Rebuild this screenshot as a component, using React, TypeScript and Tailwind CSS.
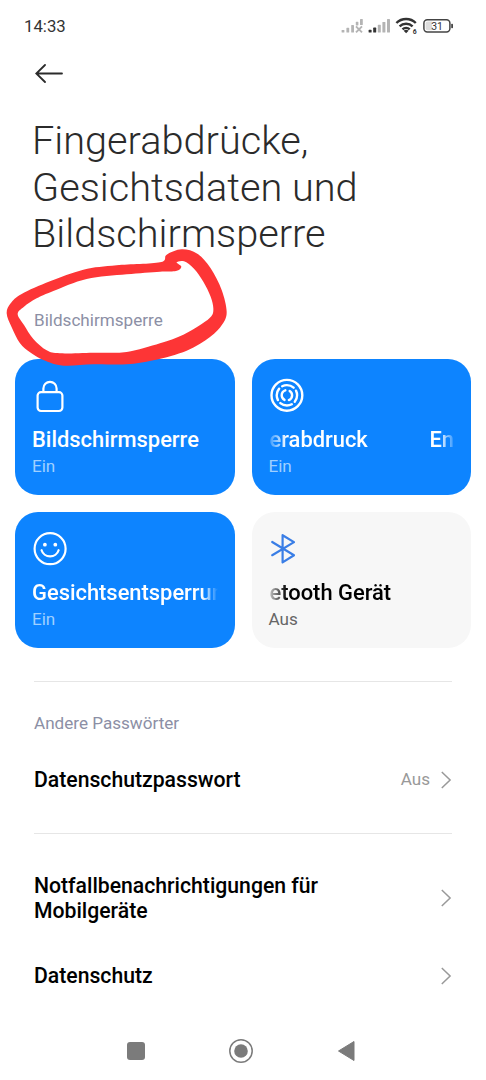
import React from 'react';

interface TileProps {
  icon: React.ReactNode;
  status: string;
  active?: boolean;
  children: React.ReactNode;
}

const Tile: React.FC<TileProps> = ({ icon, status, active = true, children }) => (
  <div className={`h-[136px] rounded-[23px] px-[17px] pt-[18px] overflow-hidden ${active ? 'bg-[#0d84ff] text-white' : 'bg-[#f7f7f7] text-black'}`}>
    <div className="h-9">{icon}</div>
    <div className="mt-[14px] h-[26px] text-[21.9px] leading-[26px] font-medium whitespace-nowrap">{children}</div>
    <div className={`mt-[3px] text-[17.1px] leading-5 ${active ? 'text-[#9fd0ff]' : 'text-[#666666]'}`}>{status}</div>
  </div>
);

const Chevron = () => (
  <svg className="w-[11px] h-[18px] shrink-0" viewBox="0 0 11 18" fill="none" stroke="#999999" strokeWidth="1.5">
    <path d="M.8 1 L9.1 9 L.8 17" />
  </svg>
);

const LockIcon = () => (
  <svg className="w-9 h-9" viewBox="0 0 36 36" fill="none" stroke="white" strokeWidth="2.2">
    <rect x="5.6" y="15.2" width="24.8" height="18.8" rx="3.4" />
    <path d="M11.4 15 V11.4 a6.6 6.6 0 0 1 13.2 0 V15" />
  </svg>
);

const FingerprintIcon = () => (
  <svg className="w-9 h-9" viewBox="0 0 36 36" fill="none" stroke="white" strokeWidth="2.4">
    <circle cx="17.9" cy="18.3" r="15.4" />
    <circle cx="17.9" cy="18.3" r="10.2" strokeDasharray="12.2 3.82" strokeDashoffset="5.2" strokeLinecap="round" />
    <circle cx="17.9" cy="18.3" r="5.2" strokeDasharray="11.8 4.54" strokeDashoffset="5.9" strokeLinecap="round" />
  </svg>
);

const FaceIcon = () => (
  <svg className="w-9 h-9" viewBox="0 0 36 36" fill="none" stroke="white" strokeWidth="2.2">
    <circle cx="18.1" cy="18.7" r="15.5" />
    <path d="M9.6 20.2 a8.8 8.2 0 0 0 17 0" strokeLinecap="round" />
    <circle cx="12.9" cy="14.7" r="1.9" fill="white" stroke="none" />
    <circle cx="23.3" cy="14.7" r="1.9" fill="white" stroke="none" />
  </svg>
);

const BluetoothIcon = () => (
  <svg className="w-9 h-9" viewBox="0 0 36 36" fill="none" stroke="#3a7ee6" strokeWidth="2.2" strokeLinejoin="round" strokeLinecap="round">
    <path d="M3.2 12 L25 25.2 L13.6 32.4 V5.2 L25 12.1 L3.2 25.2" />
  </svg>
);

const StatusIcons = () => (
  <svg className="w-[118px] h-[20px]" viewBox="0 0 118 20">
    {/* SIM 1, no service */}
    <g fill="#b4b4b4">
      <rect x="2.6" y="13" width="2.8" height="2.6" rx=".6" />
      <rect x="7.4" y="10.8" width="2.8" height="4.8" rx=".6" />
      <rect x="12.2" y="8" width="2.8" height="7.6" rx=".6" />
      <rect x="16.8" y="4.8" width="2.6" height="3.6" rx=".6" />
      <rect x="21" y="2" width="2.8" height="6" rx=".6" />
    </g>
    <path d="M17 9.4 L23 15.4 M23 9.4 L17 15.4" stroke="#b4b4b4" strokeWidth="1.9" />
    {/* SIM 2 */}
    <rect x="29.6" y="12.8" width="3" height="2.8" rx=".6" fill="#333" />
    <rect x="34.2" y="10.6" width="3" height="5" rx=".6" fill="#333" />
    <rect x="38.8" y="7.8" width="3" height="7.8" rx=".6" fill="#b4b4b4" />
    <rect x="43.4" y="5" width="3" height="10.6" rx=".6" fill="#b4b4b4" />
    <rect x="48" y="2" width="3" height="13.6" rx=".6" fill="#b4b4b4" />
    {/* wifi 6 */}
    <g fill="none" stroke="#333" strokeWidth="2.4">
      <path d="M57.4 6 a13.6 13.6 0 0 1 19.4 0" />
      <path d="M60.6 9.4 a9.3 9.3 0 0 1 13 0" />
      <path d="M63.5 12.4 a5.1 5.1 0 0 1 7.2 0" />
    </g>
    <path d="M64.6 13.8 a3.7 3.7 0 0 1 5 0 L67.1 16.2 Z" fill="#333" />
    <text x="73.8" y="17.2" fontSize="6.8" fontWeight="700" fill="#333">6</text>
    {/* battery */}
    <rect x="84.9" y="2.8" width="26" height="12.2" rx="3.4" fill="white" stroke="#444" strokeWidth="1.5" />
    <path d="M88.6 4.6 H93 V13.2 H88.6 a2 2 0 0 1 -2 -2 V6.6 a2 2 0 0 1 2 -2 Z" fill="#dddddd" />
    <rect x="112.2" y="6.8" width="1.8" height="4.4" rx=".8" fill="#444" />
    <text x="98" y="12.7" fontSize="10.4" textAnchor="middle" fill="#333">31</text>
  </svg>
);

type Point = [number, number];

const outerEdge: Point[] = [
  [480, 67], [500, 44], [545, 28], [592, 41], [632, 85], [665, 150], [680, 215], [667, 253], [630, 291], [560, 332],
  [460, 361], [380, 373], [280, 373], [190, 377], [130, 360], [90, 337], [60, 310], [35, 262], [20, 220], [32, 190],
  [65, 162], [150, 124], [250, 89], [350, 76],
];

const innerEdge: Point[] = [
  [528, 93], [480, 95], [380, 103], [260, 117], [160, 153], [110, 175], [72, 200], [53, 222], [72, 255], [100, 297],
  [140, 331], [180, 340], [280, 338], [380, 336], [480, 310], [550, 284], [605, 252], [634, 229], [640, 205],
  [632, 170], [610, 125], [582, 86], [552, 64], [530, 67], [544, 80],
];

// closed curve through all points (Catmull-Rom as cubic beziers)
const smoothPath = (pts: Point[]) => {
  const n = pts.length;
  let d = `M${pts[0][0]} ${pts[0][1]}`;
  for (let i = 0; i < n; i++) {
    const p0 = pts[(i - 1 + n) % n];
    const p1 = pts[i];
    const p2 = pts[(i + 1) % n];
    const p3 = pts[(i + 2) % n];
    d += ` C${p1[0] + (p2[0] - p0[0]) / 6} ${p1[1] + (p2[1] - p0[1]) / 6} ${p2[0] - (p3[0] - p1[0]) / 6} ${p2[1] - (p3[1] - p1[1]) / 6} ${p2[0]} ${p2[1]}`;
  }
  return d + ' Z';
};

// freehand marker loop around the section label
const MarkerCircle = () => (
  <svg className="absolute left-0 top-[240px] w-[240px] h-[130px] pointer-events-none" viewBox="0 0 720 390">
    <path fill="#fd3536" fillRule="evenodd" d={smoothPath(outerEdge) + ' ' + smoothPath(innerEdge)} />
  </svg>
);

const App: React.FC = () => {
  return (
    <div className="relative w-[486px] h-[1080px] overflow-hidden bg-white font-['Roboto',sans-serif] flex flex-col">
      <div className="h-[52px] shrink-0 flex items-start justify-between pl-6 pr-[29px] pt-[17px]">
        <span className="-mt-px text-[16.8px] leading-5 text-[#333333]">14:33</span>
        <StatusIcons />
      </div>

      <div className="h-[66px] shrink-0 pl-[35px] pt-[12px]">
        <svg className="w-7 h-5" viewBox="0 0 28 20" fill="none" stroke="#2b2b2b" strokeWidth="1.8" strokeLinecap="round">
          <path d="M27 9.5 H1.5 M10 1 L1.3 9.5 L10 18" />
        </svg>
      </div>

      <h1 className="pl-[32px] text-[39.7px] leading-[46.5px] font-light text-[#2b2b2b] whitespace-nowrap">
        Fingerabdrücke,<br />Gesichtsdaten und<br />Bildschirmsperre
      </h1>

      <div className="mt-[52px] h-5 pl-[34px] text-[17.1px] leading-5 text-[#8c8fa5]">Bildschirmsperre</div>

      <div className="mt-[29.5px] px-[15px] grid grid-cols-2 gap-x-[17px] gap-y-[17px]">
        <Tile icon={<LockIcon />} status="Ein">Bildschirmsperre</Tile>
        <Tile icon={<FingerprintIcon />} status="Ein">
          <div className="flex justify-between overflow-hidden pl-px mask-[linear-gradient(to_right,transparent_-4px,black_18px,black_170px,transparent_188px)]">
            <span>erabdruck</span>
            <span>En</span>
          </div>
        </Tile>
        <Tile icon={<FaceIcon />} status="Ein">
          <div className="overflow-hidden mask-[linear-gradient(to_right,black_170px,transparent_186px)]">Gesichtsentsperrun</div>
        </Tile>
        <Tile icon={<BluetoothIcon />} status="Aus" active={false}>
          <div className="overflow-hidden pl-px mask-[linear-gradient(to_right,transparent_-4px,black_18px)]">etooth Gerät</div>
        </Tile>
      </div>

      <div className="mx-[34px] mt-[33px] h-px shrink-0 bg-[#e6e6e6]" />

      <div className="mt-[31px] h-5 pl-[34px] text-[17.1px] leading-5 text-[#8c8fa5]">Andere Passwörter</div>

      <div className="mt-[33px] h-7 pl-[34px] pr-[34px] flex items-center">
        <span className="flex-1 text-[21.2px] font-medium text-black">Datenschutzpasswort</span>
        <span className="mr-[11px] text-[17.1px] text-[#999999]">Aus</span>
        <Chevron />
      </div>

      <div className="mx-[34px] mt-[39px] h-px shrink-0 bg-[#e6e6e6]" />

      <div className="mt-[38.5px] pl-[34px] pr-[34px] flex items-center justify-between">
        <span className="text-[21.2px] leading-[25px] font-medium text-black">Notfallbenachrichtigungen für<br />Mobilgeräte</span>
        <Chevron />
      </div>

      <div className="mt-[40px] h-[26px] pl-[34px] pr-[34px] flex items-center justify-between">
        <span className="text-[21.2px] font-medium text-black">Datenschutz</span>
        <Chevron />
      </div>

      {/* system navigation */}
      <div className="mt-auto h-[59px] shrink-0 flex items-center pl-[127px] pr-[131.5px] justify-between">
        <div className="w-[18px] h-[18px] rounded-[3px] bg-[#7b7b7b]" />
        <svg className="w-6 h-6" viewBox="0 0 24 24">
          <circle cx="12" cy="12" r="11.2" fill="none" stroke="#7b7b7b" strokeWidth="1.5" />
          <circle cx="12" cy="12" r="6.8" fill="#7b7b7b" />
        </svg>
        <svg className="w-[18px] h-[22px]" viewBox="0 0 18 22">
          <path d="M1.5 11 L17 1.5 V20.5 Z" fill="#7b7b7b" stroke="#7b7b7b" strokeLinejoin="round" />
        </svg>
      </div>

      <MarkerCircle />
    </div>
  );
};

export default App;
